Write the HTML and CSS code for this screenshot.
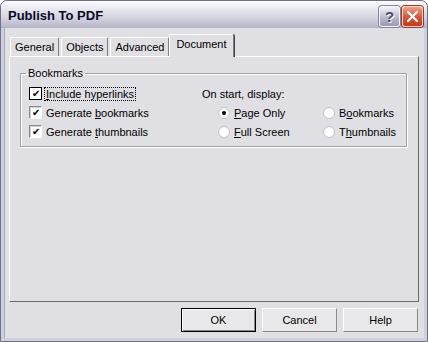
FILE: index.html
```html
<!DOCTYPE html>
<html lang="en">
<head>
  <meta charset="UTF-8">
  <title>Publish To PDF</title>
  <link rel="stylesheet" href="styles.css">
</head>
<body>
  <div class="window">
    <div class="titlebar">
      <span class="title">Publish To PDF</span>
      <div class="caption-buttons">
        <span class="cap-btn help-btn">?</span>
        <span class="cap-btn close-btn">
          <svg width="13" height="13" viewBox="0 0 13 13">
            <path d="M2 2 L11 11 M11 2 L2 11" stroke="#fff" stroke-width="2.2" stroke-linecap="round"/>
          </svg>
        </span>
      </div>
    </div>

    <div class="client">
      <div class="tabs">
        <div class="tab">General</div>
        <div class="tab">Objects</div>
        <div class="tab">Advanced</div>
        <div class="tab active">Document</div>
      </div>

      <div class="panel">
        <fieldset class="group">
          <legend>Bookmarks</legend>
          <div class="group-body">
            <div class="col-left">
              <div class="row">
                <span class="check focused">&#10004;</span>
                <span class="label focus-ring"><u>I</u>nclude hyperlinks</span>
              </div>
              <div class="row">
                <span class="check">&#10004;</span>
                <span class="label">Generate <u>b</u>ookmarks</span>
              </div>
              <div class="row">
                <span class="check">&#10004;</span>
                <span class="label">Generate <u>t</u>humbnails</span>
              </div>
            </div>
            <div class="col-right">
              <div class="row heading">On start, display:</div>
              <div class="radios">
                <div class="row"><span class="radio checked"></span><span class="label"><u>P</u>age Only</span></div>
                <div class="row"><span class="radio"></span><span class="label">B<u>o</u>okmarks</span></div>
                <div class="row"><span class="radio"></span><span class="label"><u>F</u>ull Screen</span></div>
                <div class="row"><span class="radio"></span><span class="label">T<u>h</u>umbnails</span></div>
              </div>
            </div>
          </div>
        </fieldset>
      </div>

      <div class="buttons">
        <button class="btn default">OK</button>
        <button class="btn">Cancel</button>
        <button class="btn">Help</button>
      </div>
    </div>
  </div>
</body>
</html>
```

FILE: styles.css
```css
body {
  margin: 0;
  background-color: #fff;
  font-family: "Liberation Sans", Arial, sans-serif;
  font-size: 11px;
  color: #000;
}

.window {
  width: 428px;
  height: 342px;
  box-sizing: border-box;
  border: 1px solid #6f6f8a;
  border-radius: 7px 7px 0 0;
  background-color: #cfcfdc; /* frame */
  padding: 0 3px 3px;
  display: flex;
  flex-direction: column;
  overflow: hidden;
}

.titlebar {
  height: 27px;
  margin: 0 -3px;
  padding: 0 4px 0 7px;
  display: flex;
  align-items: center;
  justify-content: space-between;
  background: linear-gradient(#fdfdff 0%, #e4e4ec 35%, #d2d2de 65%, #b3b3c6 100%);
  border-radius: 6px 6px 0 0;
}

.title {
  font-weight: bold;
  font-size: 13px;
  color: #0a0a28;
  padding-top: 1px;
}

.caption-buttons {
  display: flex;
  gap: 2px;
  margin-top: 3px;
}

.cap-btn {
  width: 21px;
  height: 21px;
  box-sizing: border-box;
  border-radius: 3px;
  display: flex;
  align-items: center;
  justify-content: center;
}

.help-btn {
  background: linear-gradient(#f3f3fa, #b6b6ca 60%, #9a9ab6);
  border: 1px solid #f4f4fa;
  box-shadow: 0 0 0 1px #8585a0;
  color: #4c4c6a;
  font-weight: bold;
  font-size: 15px;
  text-shadow: 1px 1px 0 #fff;
}

.close-btn {
  background: linear-gradient(#f0a088, #d6553a 55%, #c23a1f);
  border: 1px solid #fbd7cb;
  box-shadow: 0 0 0 1px #9a3a2a;
}

.client {
  flex: 1;
  background-color: #e0dfe3;
  border-left: 1px solid #a8a8b8;
  padding: 6px 5px 0 4px;
}

.tabs {
  display: flex;
  align-items: flex-end;
  padding-left: 1px;
  height: 22px;
  gap: 2px;
}

.tab {
  height: 19px;
  box-sizing: border-box;
  padding: 3px 4px 0 4px;
  border: 1px solid #fff;
  border-bottom: none;
  border-right-color: #808080;
  border-radius: 2px 2px 0 0;
  background-color: #e0dfe3;
}

.tab.active {
  height: 23px;
  margin: 0 -2px -1px;
  padding: 3px 6px 0 6px;
  position: relative;
  z-index: 1;
  box-shadow: 1px 0 0 #404040;
}

.panel {
  height: 246px;
  box-sizing: border-box;
  border: 1px solid #fff;
  border-right-color: #6a6a6a;
  border-bottom-color: #6a6a6a;
  padding: 10px 11px 0 10px;
}

.group {
  margin: 0;
  padding: 4px 0 5px 8px;
  border: 1px solid #a0a0a8;
  box-shadow: 1px 1px 0 #fff, inset 1px 1px 0 #fff;
  min-width: 0;
}

.group legend {
  padding: 0 2px;
  margin-left: -3px;
  line-height: 13px;
}

.group-body {
  display: flex;
}

.col-left {
  width: 173px;
}

.row {
  height: 19px;
  display: flex;
  align-items: center;
}

.check {
  width: 13px;
  height: 13px;
  box-sizing: border-box;
  background-color: #fff;
  border: 1px solid #fff;
  border-top-color: #8a8a8a;
  border-left-color: #8a8a8a;
  box-shadow: inset 1px 1px 0 #d0d0d0;
  font-size: 10px;
  line-height: 11px;
  text-align: center;
  margin-right: 4px;
}

.check.focused {
  border: 1px solid #000;
  box-shadow: none;
}

.label {
  white-space: nowrap;
}

.focus-ring {
  outline: 1px dotted #000;
  outline-offset: 0;
  padding: 0 1px;
  margin-left: -1px;
}

.heading {
  height: 19px;
}

.radios {
  display: grid;
  grid-template-columns: 105px auto;
  padding-left: 16px;
}

.radio {
  width: 12px;
  height: 12px;
  box-sizing: border-box;
  border-radius: 50%;
  border: 1px solid #c4c4cc;
  background: radial-gradient(circle at 60% 60%, #fff 40%, #ececf0);
  margin-right: 4px;
  position: relative;
}

.radio.checked::after {
  content: "";
  position: absolute;
  left: 3px;
  top: 3px;
  width: 4px;
  height: 4px;
  border-radius: 50%;
  background-color: #000;
}

.buttons {
  display: flex;
  justify-content: flex-end;
  gap: 6px;
  margin-top: 6px;
  padding-right: 1px;
}

.btn {
  width: 75px;
  height: 24px;
  box-sizing: border-box;
  font-family: "Liberation Sans", Arial, sans-serif;
  font-size: 11px;
  color: #000;
  background-color: #e8e8ea;
  border: 1px solid #fff;
  border-right-color: #8a8a8a;
  border-bottom-color: #8a8a8a;
  padding: 0;
}

.btn.default {
  border: 1px solid #000;
  box-shadow: inset 1px 1px 0 #fff, inset -1px -1px 0 #8a8a8a;
}
```
